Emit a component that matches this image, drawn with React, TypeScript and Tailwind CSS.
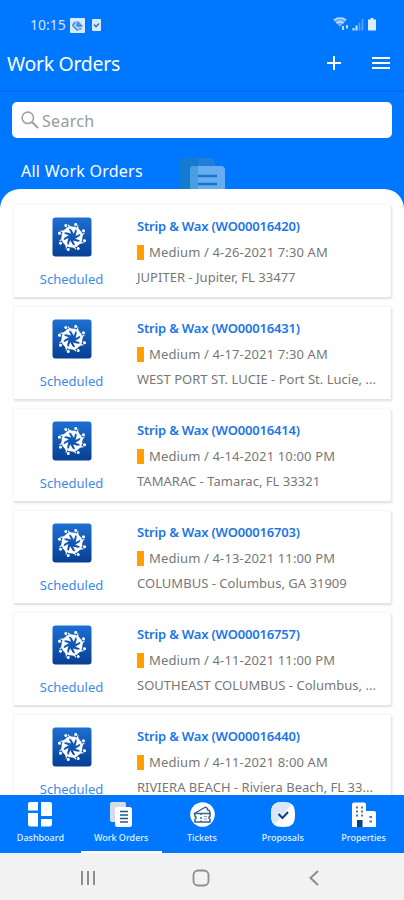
import type { ReactNode } from 'react'

type Order = { id: string; date: string; location: string }

const orders: Order[] = [
  { id: 'WO00016420', date: '4-26-2021 7:30 AM', location: 'JUPITER - Jupiter, FL 33477' },
  { id: 'WO00016431', date: '4-17-2021 7:30 AM', location: 'WEST PORT ST. LUCIE - Port St. Lucie, ...' },
  { id: 'WO00016414', date: '4-14-2021 10:00 PM', location: 'TAMARAC - Tamarac, FL 33321' },
  { id: 'WO00016703', date: '4-13-2021 11:00 PM', location: 'COLUMBUS - Columbus, GA 31909' },
  { id: 'WO00016757', date: '4-11-2021 11:00 PM', location: 'SOUTHEAST COLUMBUS - Columbus, ...' },
  { id: 'WO00016440', date: '4-11-2021 8:00 AM', location: 'RIVIERA BEACH - Riviera Beach, FL 33...' },
]

const StatusBar = () => (
  <div className="h-[46px] pt-[17px] pl-[30px] pr-[26px] flex items-start justify-between text-[#cfe4ff]">
    <div className="flex items-center h-4">
      <span className="w-[40px] text-[14px] leading-4 whitespace-nowrap">10:15</span>
      <svg className="w-[15px] h-[15px]" viewBox="0 0 15 15">
        <rect width="15" height="15" rx="1" fill="#d9eaff" />
        <path d="M2 8c0-3 3-5.500 6-5l5 5-2 3.500-4 1.500z" fill="#4a93ea" />
        <path d="M4 7l4 3 5-1M7 3L5 7l4 5" stroke="#d9eaff" strokeWidth="1" fill="none" />
      </svg>
      <svg className="ml-[7px] w-[9px] h-[12px]" viewBox="0 0 9 12">
        <rect width="9" height="12" rx="1" fill="#d9eaff" />
        <path d="M2 5.500l2 2.200 3-3.200" stroke="#1673ea" strokeWidth="1.500" fill="none" />
      </svg>
    </div>
    <svg className="w-[45px] h-[15px]" viewBox="0 0 45 15">
      <path d="M.8 3.200a9.500 9.500 0 0 1 12.400 0L7 10z" fill="#6eb0ff" />
      <path d="M.8 3.200a9.500 9.500 0 0 1 12.400 0M3.500 6.200a5.500 5.500 0 0 1 7 0" stroke="#cfe4ff" strokeWidth="1.300" fill="none" />
      <path d="M10 9v4M14 8v3.500" stroke="#cfe4ff" strokeWidth="1.800" />
      <path d="M20.500 11v2.500M23.500 8.500v5" stroke="#cfe4ff" strokeWidth="2" />
      <path d="M26.500 5.500v8M29.500 2v11.500" stroke="#5aa4ff" strokeWidth="1.600" />
      <path d="M37.500 1h3v1.500h2.500V13.500h-8V2.500h2.500z" fill="#dcebff" />
    </svg>
  </div>
)

const Header = () => (
  <div className="h-[46px] pl-[7px] pr-[13px] flex items-center justify-between border-b-2 border-[#056cee] text-white">
    <h1 className="text-[19.5px] leading-6 pb-[8px] tracking-[-0.3px] whitespace-nowrap">Work Orders</h1>
    <div className="flex items-center gap-[29px] pb-[10px]">
      <svg className="w-[16px] h-[16px]" viewBox="0 0 16 16">
        <path d="M8 1v14M1 8h14" stroke="white" strokeWidth="2" />
      </svg>
      <svg className="w-[20px] h-[16px]" viewBox="0 0 20 16">
        <path d="M1 3h18M1 8h18M1 13h18" stroke="white" strokeWidth="2" />
      </svg>
    </div>
  </div>
)

const SearchBox = () => (
  <div className="mx-3 mt-[10px] h-[36px] bg-white rounded-[5px] flex items-center pl-[9px] text-[#9a9a9a]">
    <svg className="w-[18px] h-[18px]" viewBox="0 0 18 18">
      <circle cx="6.800" cy="6.800" r="5.700" stroke="#a0a0a0" strokeWidth="1.600" fill="none" />
      <path d="M11 11l6 6" stroke="#a0a0a0" strokeWidth="2" />
    </svg>
    <span className="ml-[3px] pt-[2px] text-[16px] leading-5 tracking-[0.3px]">Search</span>
  </div>
)

const Logo = () => (
  <svg className="w-[40px] h-[40px]" viewBox="0 0 40 40">
    <defs>
      <linearGradient id="logo-bg" x1="0" y1="0" x2="0" y2="1">
        <stop offset="0" stopColor="#1d6fd2" />
        <stop offset="1" stopColor="#073f94" />
      </linearGradient>
    </defs>
    <rect x=".5" y=".5" width="39" height="39" rx="3" fill="url(#logo-bg)" />
    {/* ring of figures with joined arms */}
    {[10, 55, 100, 145, 190, 235, 280, 325].map(a => (
      <g key={a} transform={`rotate(${a} 20 20)`}>
        <circle cx="21.500" cy="7" r="1.500" fill="white" />
        <path d="M13.500 7.500c1.500 2.300 4 2.800 8 1.800l3.500 2-3 .7-.8 4.500-3.200-3.700c-2.300-.8-4-2.500-4.500-5.300z" fill="white" />
      </g>
    ))}
  </svg>
)

const OrderCard = ({ order }: { order: Order }) => (
  <div className="h-[93px] shrink-0 flex bg-white border-x border-t border-[#f7f7f7] shadow-[1px_2px_2px_rgba(0,0,0,0.12)]">
    <div className="w-[115px] pt-[12px] flex flex-col items-center">
      <Logo />
      <span className="mt-[13px] text-[13px] leading-[18px] text-[#3e89e8]">Scheduled</span>
    </div>
    <div className="pt-[9px] pl-[8px] whitespace-nowrap text-[13px] text-[#777]">
      <p className="h-[26px] leading-[25px] font-semibold tracking-[-0.18px] text-[#1b75e8]">Strip &amp; Wax ({order.id})</p>
      <p className="h-[25px] leading-[25px] flex items-center">
        <span className="w-[7px] h-[15px] mr-[5px] bg-[#ffa000]" />
        <span className="tracking-[0.14px]">Medium / {order.date}</span>
      </p>
      <p className="h-[25px] leading-[25px] tracking-[0.02px]">{order.location}</p>
    </div>
  </div>
)

const NavItem = ({ label, active, children }: { label: string; active?: boolean; children: ReactNode }) => (
  <div className={`flex-1 flex flex-col items-center pt-[7px] border-b-2 ${active ? 'border-white' : 'border-transparent'}`}>
    <svg className="w-[26px] h-[26px]" viewBox="0 0 26 26">{children}</svg>
    <span className="mt-[4px] text-[9px] leading-3 font-medium whitespace-nowrap text-[#e6f1ff]">{label}</span>
  </div>
)

const BottomNav = () => (
  <nav className="h-[58px] shrink-0 flex bg-[#0077ff]">
    <NavItem label="Dashboard">
      <path d="M2.500 0H11v8.500H1V2a2 2 0 0 1 1.500-2zM14 0h9a2 2 0 0 1 2 2v12H14zM1 11h10v13.500H3a2 2 0 0 1-2-2zM14 17h11v5.500a2 2 0 0 1-2 2h-9z" fill="white" />
    </NavItem>
    <NavItem label="Work Orders" active>
      <path d="M4 0h12a2 2 0 0 1 2 2v18H4a2 2 0 0 1-2-2V2a2 2 0 0 1 2-2z" fill="#d7dce4" />
      <rect x="7" y="5" width="17" height="20" rx="2.500" fill="white" />
      <path d="M12 9.500h8M12 13h8M12 16.500h8M12 20h8" stroke="#245985" strokeWidth="1.400" />
    </NavItem>
    <NavItem label="Tickets">
      <circle cx="13.500" cy="12.500" r="12.300" fill="white" />
      <path d="M5.500 11.500L16.500 5l2 1.500a1.500 1.500 0 0 0 1.800 2l1 3" stroke="#32668f" strokeWidth="1.400" fill="none" />
      <path d="M5.500 11.500h15.500v2.800a1.600 1.600 0 0 0 0 3V20H6v-2.700a1.600 1.600 0 0 0 0-3z" stroke="#32668f" strokeWidth="1.500" fill="none" />
      <path d="M12 11v2M12 15v2M12 18.500v1.500" stroke="#32668f" strokeWidth="1.400" />
      <path d="M15 14.500h3M15 17h3" stroke="#7fa3c2" strokeWidth="1" />
    </NavItem>
    <NavItem label="Proposals">
      <path d="M13 0c9 0 12 3 12 12.500S22 25 13 25 1 22 1 12.500 4 0 13 0z" fill="white" />
      <path d="M13 0C4 0 1 3 1 12.500c0 5 1 8 3.500 10.300L21 3C19 .8 16 0 13 0z" fill="#dce7f5" />
      <path d="M8.500 12l4 4 5.500-6" stroke="#103f78" strokeWidth="2" fill="none" />
    </NavItem>
    <NavItem label="Properties">
      <path d="M1 2a2 2 0 0 1 2-1.500h10a2 2 0 0 1 2 2V9h8a2 2 0 0 1 2 2v14H1z" fill="white" />
      <path d="M5 5.500h2M10 5.500h2M5 9.500h2M10 9.500h2M5 13.500h2M10 13.500h2M18.500 15h2.500M18.500 19.500h2.500" stroke="#50779f" strokeWidth="2" />
      <path d="M6 18h5.500v7H6z" fill="#0b417d" />
    </NavItem>
  </nav>
)

const SystemNav = () => (
  <div className="h-[47px] shrink-0 bg-[#f2f2f2] flex justify-between items-center pt-[2px] pl-[79px] pr-[81px]">
    <svg className="w-[18px] h-[18px]" viewBox="0 0 18 18">
      <path d="M3 2v14M9 2v14M15 2v14" stroke="#8e8e8e" strokeWidth="2" />
    </svg>
    <svg className="w-[18px] h-[18px]" viewBox="0 0 18 18">
      <rect x="1.500" y="1.500" width="15" height="15" rx="4.500" stroke="#8e8e8e" strokeWidth="1.800" fill="none" />
    </svg>
    <svg className="w-[18px] h-[18px]" viewBox="0 0 18 18">
      <path d="M13 2L5.500 9l7.500 7" stroke="#8e8e8e" strokeWidth="2" fill="none" />
    </svg>
  </div>
)

const App = () => (
  <div className="w-[404px] h-[900px] flex flex-col overflow-hidden bg-[#0077ff] font-['Noto_Sans',sans-serif]">
    {/* Top */}
    <div className="h-[189px] shrink-0 relative">
      <StatusBar />
      <Header />
      <SearchBox />
      <h2 className="pl-[21px] pt-[22px] text-[16px] leading-[22px] tracking-[0.25px] text-white">All Work Orders</h2>
      <svg className="absolute left-[180px] top-[157px] w-[46px] h-[32px]" viewBox="0 0 46 32">
        <path d="M0 1h30a5 5 0 0 1 5 5v26H0z" fill="#207fdd" />
        <path d="M0 1h18v31H0z" fill="#147bd0" />
        <path d="M10 32V13a4 4 0 0 1 4-4h27a4 4 0 0 1 4 4v19z" fill="#67adef" />
        <path d="M10 32V13a4 4 0 0 1 4-4h4v23z" fill="#479fe2" />
        <path d="M18 19h19M18 27h19" stroke="#1476cf" strokeWidth="2.400" />
      </svg>
    </div>

    {/* Orders */}
    <div className="flex-1 min-h-0 overflow-hidden bg-[#fefefe] rounded-t-[20px] pt-[15px] px-[13px] flex flex-col gap-[9px]">
      {orders.map(o => <OrderCard key={o.id} order={o} />)}
    </div>

    <BottomNav />
    <SystemNav />
  </div>
)

export default App
